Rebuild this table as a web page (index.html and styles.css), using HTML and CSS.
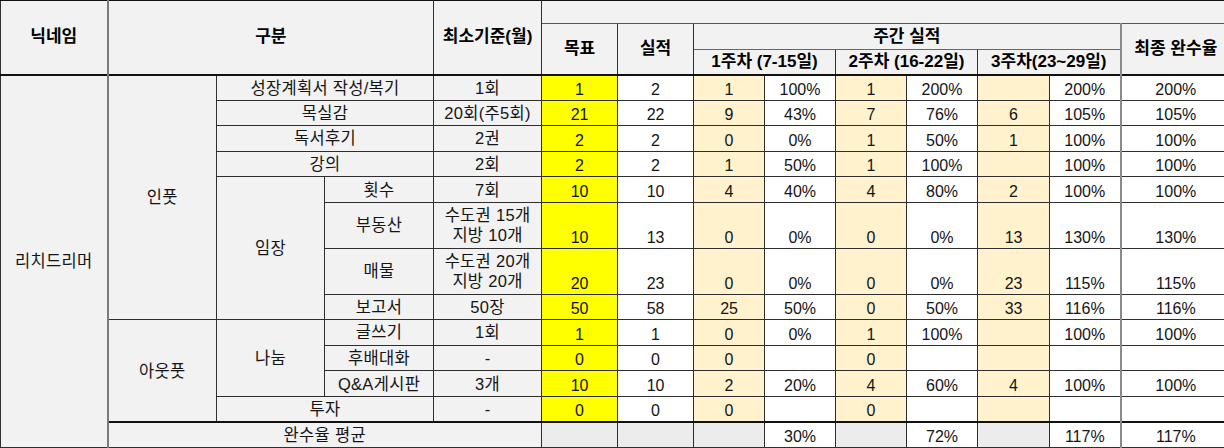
FILE: index.html
```html
<!DOCTYPE html>
<html lang="ko">
<head>
<meta charset="utf-8">
<title>완수율</title>
<link rel="stylesheet" href="styles.css">
</head>
<body>
<table class="sheet">
  <colgroup>
    <col class="c-a"><col class="c-b"><col class="c-c"><col class="c-d"><col class="c-e">
    <col class="c-n"><col class="c-n">
    <col class="c-w"><col class="c-w"><col class="c-w"><col class="c-w"><col class="c-w2"><col class="c-w">
    <col class="c-f">
  </colgroup>
  <thead>
    <tr class="h1">
      <th rowspan="3" class="nick">닉네임</th>
      <th rowspan="3" colspan="3">구분</th>
      <th rowspan="3" class="mincol">최소기준(월)</th>
      <th colspan="9" class="blank"></th>
    </tr>
    <tr class="h2">
      <th rowspan="2">목표</th>
      <th rowspan="2">실적</th>
      <th colspan="6" class="gray-b">주간 실적</th>
      <th rowspan="2" class="fin">최종 완수율</th>
    </tr>
    <tr class="h3">
      <th colspan="2">1주차 (7-15일)</th>
      <th colspan="2">2주차 (16-22일)</th>
      <th colspan="2">3주차(23~29일)</th>
    </tr>
  </thead>
  <tbody>
    <tr class="r first">
      <td rowspan="13" class="lbl nick">리치드리머</td>
      <td rowspan="8" class="lbl">인풋</td>
      <td colspan="2" class="lbl">성장계획서 작성/복기</td>
      <td class="lbl">1회</td>
      <td class="goal">1</td><td class="val">2</td>
      <td class="wk">1</td><td class="val">100%</td>
      <td class="wk">1</td><td class="val">200%</td>
      <td class="wk"></td><td class="val">200%</td>
      <td class="val fin">200%</td>
    </tr>
    <tr class="r">
      <td colspan="2" class="lbl">목실감</td>
      <td class="lbl">20회(주5회)</td>
      <td class="goal">21</td><td class="val">22</td>
      <td class="wk">9</td><td class="val">43%</td>
      <td class="wk">7</td><td class="val">76%</td>
      <td class="wk">6</td><td class="val">105%</td>
      <td class="val fin">105%</td>
    </tr>
    <tr class="r">
      <td colspan="2" class="lbl">독서후기</td>
      <td class="lbl">2권</td>
      <td class="goal">2</td><td class="val">2</td>
      <td class="wk">0</td><td class="val">0%</td>
      <td class="wk">1</td><td class="val">50%</td>
      <td class="wk">1</td><td class="val">100%</td>
      <td class="val fin">100%</td>
    </tr>
    <tr class="r">
      <td colspan="2" class="lbl">강의</td>
      <td class="lbl">2회</td>
      <td class="goal">2</td><td class="val">2</td>
      <td class="wk">1</td><td class="val">50%</td>
      <td class="wk">1</td><td class="val">100%</td>
      <td class="wk"></td><td class="val">100%</td>
      <td class="val fin">100%</td>
    </tr>
    <tr class="r">
      <td rowspan="4" class="lbl">임장</td>
      <td class="lbl">횟수</td>
      <td class="lbl">7회</td>
      <td class="goal">10</td><td class="val">10</td>
      <td class="wk">4</td><td class="val">40%</td>
      <td class="wk">4</td><td class="val">80%</td>
      <td class="wk">2</td><td class="val">100%</td>
      <td class="val fin">100%</td>
    </tr>
    <tr class="r2">
      <td class="lbl">부동산</td>
      <td class="lbl two">수도권 15개<br>지방 10개</td>
      <td class="goal">10</td><td class="val">13</td>
      <td class="wk">0</td><td class="val">0%</td>
      <td class="wk">0</td><td class="val">0%</td>
      <td class="wk">13</td><td class="val">130%</td>
      <td class="val fin">130%</td>
    </tr>
    <tr class="r2">
      <td class="lbl">매물</td>
      <td class="lbl two">수도권 20개<br>지방 20개</td>
      <td class="goal">20</td><td class="val">23</td>
      <td class="wk">0</td><td class="val">0%</td>
      <td class="wk">0</td><td class="val">0%</td>
      <td class="wk">23</td><td class="val">115%</td>
      <td class="val fin">115%</td>
    </tr>
    <tr class="r">
      <td class="lbl">보고서</td>
      <td class="lbl">50장</td>
      <td class="goal">50</td><td class="val">58</td>
      <td class="wk">25</td><td class="val">50%</td>
      <td class="wk">0</td><td class="val">50%</td>
      <td class="wk">33</td><td class="val">116%</td>
      <td class="val fin">116%</td>
    </tr>
    <tr class="r">
      <td rowspan="4" class="lbl">아웃풋</td>
      <td rowspan="3" class="lbl">나눔</td>
      <td class="lbl">글쓰기</td>
      <td class="lbl">1회</td>
      <td class="goal">1</td><td class="val">1</td>
      <td class="wk">0</td><td class="val">0%</td>
      <td class="wk">1</td><td class="val">100%</td>
      <td class="wk"></td><td class="val">100%</td>
      <td class="val fin">100%</td>
    </tr>
    <tr class="r">
      <td class="lbl">후배대화</td>
      <td class="lbl">-</td>
      <td class="goal">0</td><td class="val">0</td>
      <td class="wk">0</td><td class="val"></td>
      <td class="wk">0</td><td class="val"></td>
      <td class="wk"></td><td class="val"></td>
      <td class="val fin"></td>
    </tr>
    <tr class="r">
      <td class="lbl">Q&amp;A게시판</td>
      <td class="lbl">3개</td>
      <td class="goal">10</td><td class="val">10</td>
      <td class="wk">2</td><td class="val">20%</td>
      <td class="wk">4</td><td class="val">60%</td>
      <td class="wk">4</td><td class="val">100%</td>
      <td class="val fin">100%</td>
    </tr>
    <tr class="r">
      <td colspan="2" class="lbl">투자</td>
      <td class="lbl">-</td>
      <td class="goal">0</td><td class="val">0</td>
      <td class="wk">0</td><td class="val"></td>
      <td class="wk">0</td><td class="val"></td>
      <td class="wk"></td><td class="val"></td>
      <td class="val fin"></td>
    </tr>
    <tr class="r avg">
      <td colspan="4" class="lbl">완수율 평균</td>
      <td class="empty"></td><td class="empty"></td>
      <td class="empty"></td><td class="val">30%</td>
      <td class="empty"></td><td class="val">72%</td>
      <td class="empty"></td><td class="val">117%</td>
      <td class="val fin">117%</td>
    </tr>
  </tbody>
</table>
</body>
</html>
```

FILE: styles.css
```css
html, body {
  margin: 0;
  padding: 0;
  background: #f2f2f2;
  overflow: hidden;
}

.sheet {
  border-collapse: collapse;
  table-layout: fixed;
  width: 1230px;
  font-family: "Liberation Sans", "Noto Sans CJK KR", sans-serif;
  font-size: 16px;
  color: #141414;
  background: #f2f2f2;
}

.c-a { width: 107px; }
.c-b { width: 109px; }
.c-c { width: 108px; }
.c-d { width: 109px; }
.c-e { width: 108px; }
.c-n { width: 76px; }
.c-w { width: 71px; }
.c-w2 { width: 72px; }
.c-f { width: 110px; }

.sheet th,
.sheet td {
  border: 1px solid #2e2e2e;
  padding: 0 2px;
  text-align: center;
  white-space: nowrap;
  overflow: hidden;
  line-height: 20px;
}

.sheet th {
  font-weight: 700;
  font-size: 17px;
  color: #000;
  vertical-align: middle;
}

thead tr:first-child th { border-top: 1px solid #111; }

.h1 { height: 23px; }
.h2 { height: 26px; }
.h3 { height: 25px; }

.sheet th.blank { border-bottom: 1px solid #555; }
.sheet th.gray-b { border-bottom: 1px solid #666; }

.r { height: 25.6px; }
.r2 { height: 45.8px; }

tbody tr.first > td { border-top: 2px solid #111; }
tbody tr.avg > td { border-top: 2px solid #111; }

.sheet .nick { border-right: 2px solid #7a7a7a; }
.sheet .fin { border-left: 2px solid #8a8a8a; }

.lbl {
  background: #f2f2f2;
  vertical-align: middle;
  font-size: 16.5px;
  letter-spacing: 0.3px;
}

.two { line-height: 21px; }

.goal,
.val,
.wk,
.empty {
  vertical-align: bottom;
  padding-bottom: 2px;
}

.goal { background: #ffff00; }
.val { background: #ffffff; }
.wk { background: #fff2cc; }
.empty { background: #ececec; }
```
